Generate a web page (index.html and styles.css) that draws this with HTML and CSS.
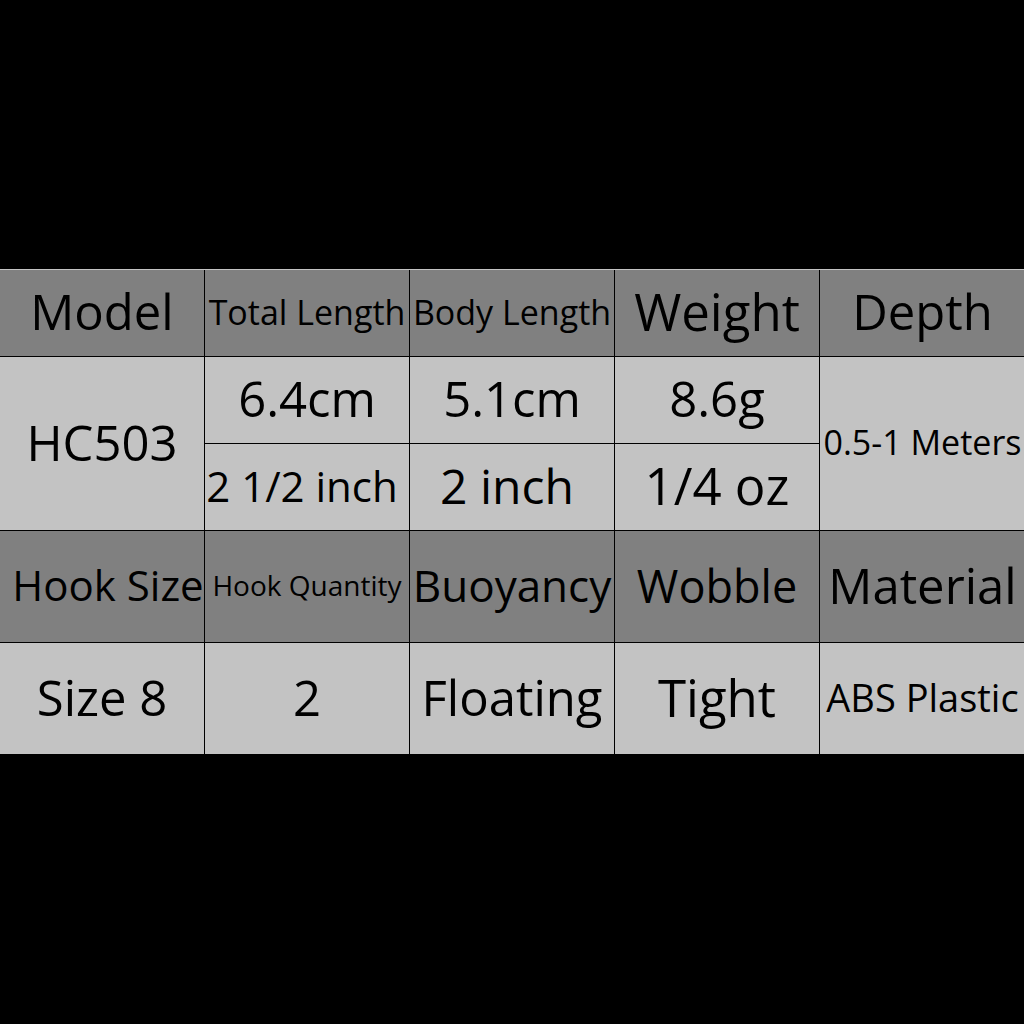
FILE: index.html
```html
<!DOCTYPE html>
<html>
<head>
<meta charset="utf-8">
<link rel="stylesheet" href="styles.css">
</head>
<body>
<div class="page">
  <div class="table">
    <div class="cell head big">Model</div>
    <div class="cell head mid">Total Length</div>
    <div class="cell head mid">Body Length</div>
    <div class="cell head big wide">Weight</div>
    <div class="cell head big">Depth</div>

    <div class="cell body big span2">HC503</div>
    <div class="cell body big">6.4cm</div>
    <div class="cell body big">5.1cm</div>
    <div class="cell body big">8.6g</div>
    <div class="cell body meters span2">0.5-1 Meters</div>

    <div class="cell body big2 shiftl">2 1/2 inch</div>
    <div class="cell body big inch">2 inch</div>
    <div class="cell body big wide">1/4 oz</div>

    <div class="cell head big2 shiftr">Hook Size</div>
    <div class="cell head small">Hook Quantity</div>
    <div class="cell head buoy">Buoyancy</div>
    <div class="cell head wob">Wobble</div>
    <div class="cell head big">Material</div>

    <div class="cell body big">Size 8</div>
    <div class="cell body big">2</div>
    <div class="cell body big">Floating</div>
    <div class="cell body big wide">Tight</div>
    <div class="cell body abs">ABS Plastic</div>
  </div>
</div>
</body>
</html>
```

FILE: styles.css
```css
html, body {
  margin: 0;
  padding: 0;
  background: #000;
}
.page {
  width: 1024px;
  height: 1024px;
  padding-top: 269px;
  box-sizing: border-box;
}
.table {
  display: grid;
  grid-template-columns: 204px 204px 204px 204px 205px;
  grid-template-rows: 86px 86px 86px 111px 111px;
  gap: 1px;
  background: #000;
  border-top: 1px solid #c4c4c4;
  font-family: "Open Sans", "Noto Sans", sans-serif;
  color: #000;
}
.cell {
  display: flex;
  align-items: center;
  justify-content: center;
  white-space: nowrap;
  overflow: visible;
  line-height: 1;
  padding-bottom: 3px;
  box-sizing: border-box;
}
.head { background: #808080; }
.body { background: #c3c3c3; }
.span2 { grid-row: span 2; }
.big { font-size: 49px; }
.big.wide { font-size: 51px; }
.big.inch { font-size: 48px; padding-right: 10px; }
.big2 { font-size: 42px; }
.shiftl { padding-right: 10px; }
.shiftr { padding-left: 12px; }
.mid { font-size: 34px; }
.small { font-size: 28px; }
.buoy { font-size: 44px; }
.wob { font-size: 45px; }
.meters { font-size: 34px; }
.abs { font-size: 38px; }
```
